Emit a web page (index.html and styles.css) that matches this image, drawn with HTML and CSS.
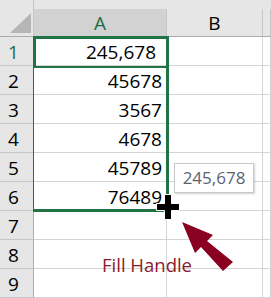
FILE: index.html
```html
<!DOCTYPE html>
<html>
<head>
<meta charset="utf-8">
<link rel="stylesheet" href="styles.css">
</head>
<body>
<div class="sheet">
  <div class="corner"><svg width="34" height="37" viewBox="0 0 34 37"><polygon points="31,13 31,33 10,33" fill="#b6b6b6"/></svg></div>
  <div class="colhead sel"><span>A</span></div>
  <div class="colhead"><span>B</span></div>
  <div class="colhead"><span></span></div>

  <div class="rowhead sel">1</div><div class="cell num first">245,678</div><div class="cell"></div><div class="cell"></div>
  <div class="rowhead">2</div><div class="cell num">45678</div><div class="cell"></div><div class="cell"></div>
  <div class="rowhead">3</div><div class="cell num">3567</div><div class="cell"></div><div class="cell"></div>
  <div class="rowhead">4</div><div class="cell num">4678</div><div class="cell"></div><div class="cell"></div>
  <div class="rowhead">5</div><div class="cell num">45789</div><div class="cell"></div><div class="cell"></div>
  <div class="rowhead">6</div><div class="cell num">76489</div><div class="cell"></div><div class="cell"></div>
  <div class="rowhead">7</div><div class="cell"></div><div class="cell"></div><div class="cell"></div>
  <div class="rowhead">8</div><div class="cell"></div><div class="cell"></div><div class="cell"></div>
  <div class="rowhead">9</div><div class="cell"></div><div class="cell"></div><div class="cell"></div>

  <div class="sel-range"></div>
  <div class="sel-active"></div>
  <div class="tooltip">245,678</div>
  <svg class="cursor" width="26" height="28" viewBox="0 0 26 28"><path d="M9.5 1.5h7v9h8v7h-8v9h-7v-9h-8v-7h8z" fill="#000" stroke="#fff" stroke-width="1"/></svg>
  <svg class="arrow" width="60" height="60" viewBox="0 0 60 60"><polygon points="2,2 33,15 27,21 53,42 43,51 21,27 15,33" fill="#8a0020"/></svg>
  <div class="label">Fill Handle</div>
</div>
</body>
</html>
```
FILE: styles.css
```css
html, body {
  margin: 0;
  padding: 0;
  background: #fff;
  overflow: hidden;
}
.sheet {
  position: relative;
  width: 271px;
  height: 298px;
  display: grid;
  grid-template-columns: 34px 133px 96px 8px;
  grid-template-rows: 37px repeat(9, 29px);
  font-family: "Open Sans", "Noto Sans", sans-serif;
  font-size: 19px;
  color: #000;
}
.corner {
  background: #e6e6e6;
  border-bottom: 1px solid #ababab;
  border-right: 1px solid #c6c6c6;
  box-sizing: border-box;
}
.corner svg { display: block; }
.colhead {
  background: #e6e6e6;
  padding-top: 9px;
  border-bottom: 1px solid #ababab;
  box-sizing: border-box;
}
.colhead span {
  display: flex;
  height: 100%;
  box-sizing: border-box;
  border-right: 1px solid #c6c6c6;
  justify-content: center;
  align-items: flex-end;
  line-height: 1;
  padding-bottom: 3px;
}
.colhead.sel span {
  background: #d2d2d2;
  color: #1f6b46;
}
.rowhead {
  background: #e6e6e6;
  border-right: 1px solid #ababab;
  border-bottom: 1px solid #c6c6c6;
  box-sizing: border-box;
  display: flex;
  justify-content: center;
  align-items: flex-end;
  line-height: 1;
  padding: 0 6px 3px 0;
}
.rowhead.sel { color: #1f6b46; }
.cell {
  border-right: 1px solid #d4d4d4;
  border-bottom: 1px solid #d4d4d4;
  box-sizing: border-box;
}
.num {
  display: flex;
  justify-content: flex-end;
  align-items: flex-end;
  line-height: 1;
  padding: 0 4px 3px 0;
}
.num.first { padding-right: 10px; }
.sel-range {
  position: absolute;
  left: 33px;
  top: 36px;
  width: 136px;
  height: 176px;
  box-sizing: border-box;
  border: 3px solid #217346;
  border-left: 1px solid #2a6b4a;
  border-top: none;
}
.sel-active {
  position: absolute;
  left: 33px;
  top: 36px;
  width: 136px;
  height: 32px;
  box-sizing: border-box;
  border: 3px solid #217346;
  border-bottom-width: 2px;
}
.tooltip {
  position: absolute;
  left: 174px;
  top: 163px;
  width: 80px;
  height: 30px;
  box-sizing: border-box;
  background: #fff;
  border: 1px solid #c8c8c8;
  box-shadow: 1px 1px 2px rgba(0,0,0,0.18);
  color: #5b6370;
  font-size: 17px;
  line-height: 28px;
  text-align: center;
}
.cursor {
  position: absolute;
  left: 155px;
  top: 193px;
}
.arrow {
  position: absolute;
  left: 180px;
  top: 220px;
}
.label {
  position: absolute;
  left: 102px;
  top: 252px;
  color: #8a1a2c;
  font-size: 18.5px;
  line-height: 26px;
  white-space: nowrap;
}
```
